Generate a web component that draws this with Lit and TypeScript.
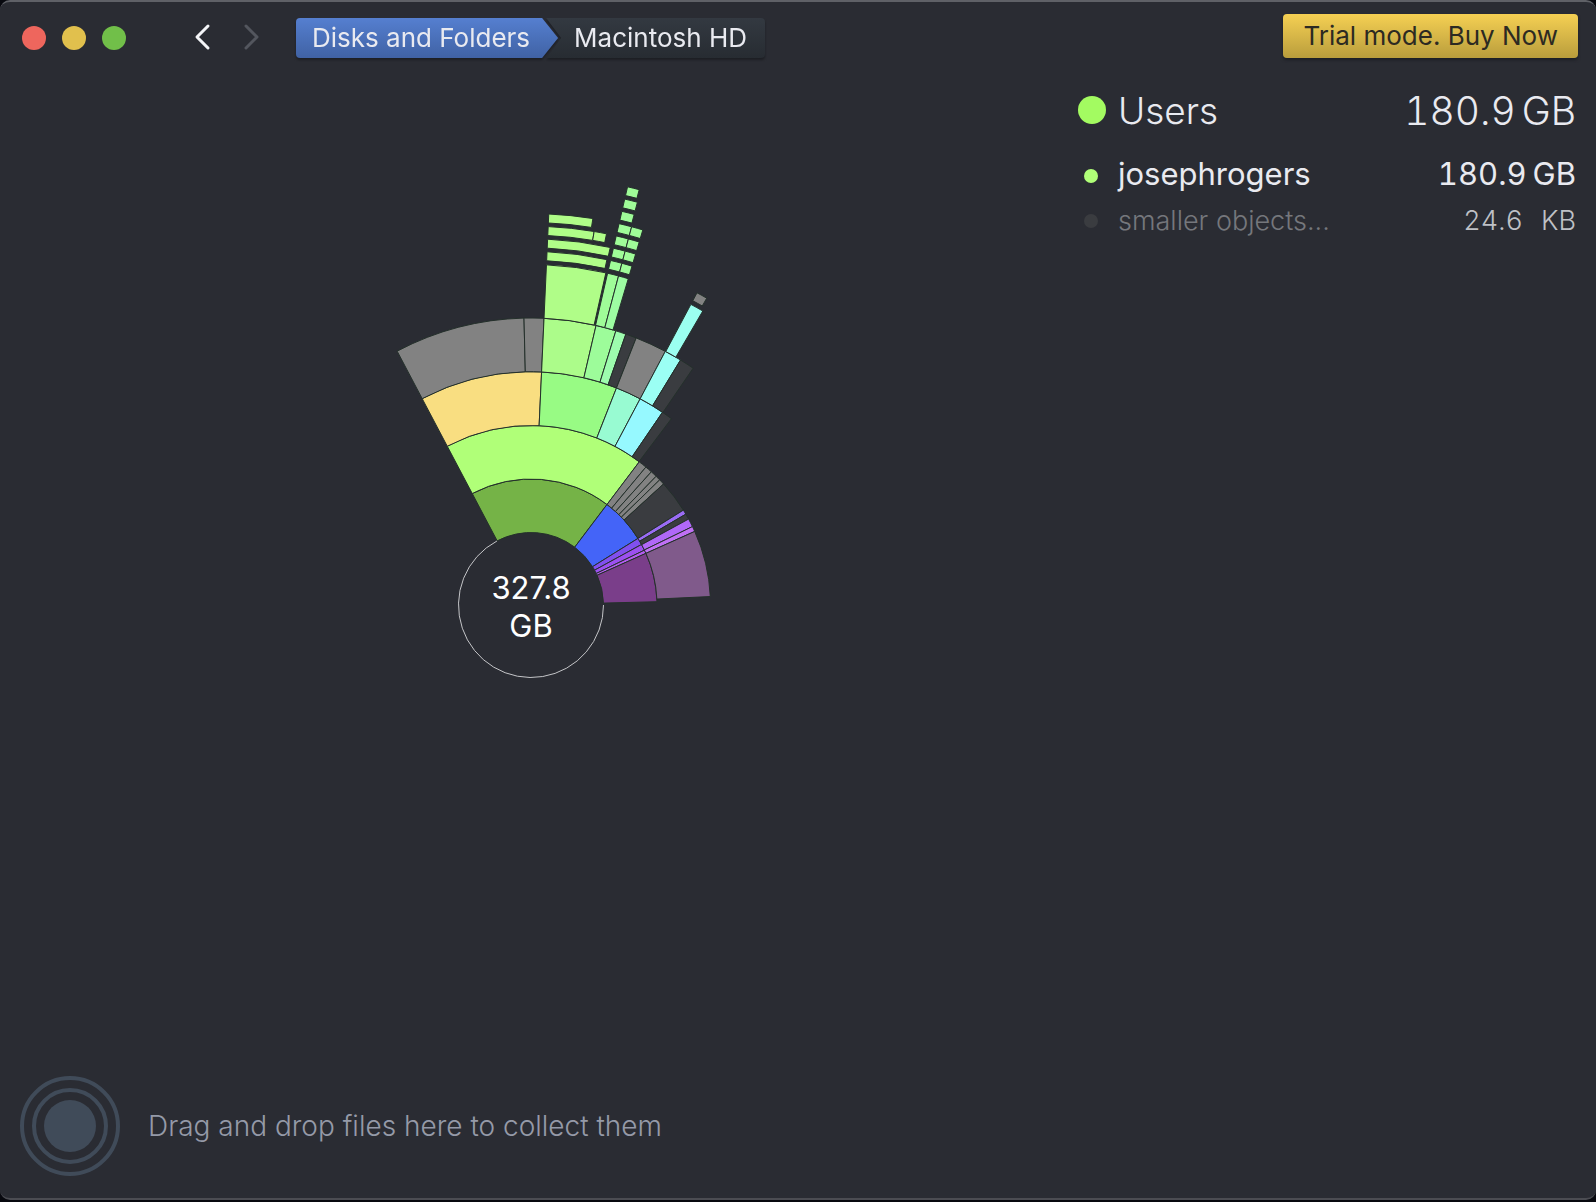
import { LitElement, html, css, svg } from "lit";
import { customElement } from "lit/decorators.js";

type Segment = [ring: number, from: number, to: number, color: string];

const SHADE = "#3a3c40";
const GRAY = "#828282";
const LIME = "#b0fd88";
const FERN = "#9ffc98";

/* Angles are degrees clockwise from twelve o'clock. Rings 0-4 are wide, later rings are thin. */
const SEGMENTS: Segment[] = [
  [0, -27.8, 37.1, "#75b347"],
  [0, 37.1, 58.1, "#4464f8"],
  [0, 58.1, 61.3, "#8150ee"],
  [0, 61.3, 64.2, "#9c50f0"],
  [0, 64.2, 65.8, "#b45cf0"],
  [0, 65.8, 88.5, "#7a3e8a"],

  [1, -27.8, 37.1, "#b0ff78"],
  [1, 37.1, 39.8, GRAY],
  [1, 39.8, 42.1, GRAY],
  [1, 42.1, 44.2, GRAY],
  [1, 44.2, 45.8, GRAY],
  [1, 45.8, 47.6, GRAY],
  [1, 47.6, 58.1, SHADE],
  [1, 58.1, 59.6, "#9a6cf4"],
  [1, 59.6, 61.4, SHADE],
  [1, 61.4, 64.1, "#b068f8"],
  [1, 64.1, 65.8, "#c070f4"],
  [1, 65.8, 87.3, "#805a8b"],

  [2, -27.8, 2.6, "#f9de81"],
  [2, 2.6, 21.5, "#98fb84"],
  [2, 21.5, 27.9, "#98fbd2"],
  [2, 27.9, 34.3, "#96f9ff"],
  [2, 34.3, 37.0, SHADE],

  [3, -27.8, -1.4, GRAY],
  [3, -1.4, 2.6, GRAY],
  [3, 2.6, 13.1, "#acfc8a"],
  [3, 13.1, 17.2, "#9dfc9a"],
  [3, 17.2, 19.3, "#9dfcae"],
  [3, 19.3, 21.5, SHADE],
  [3, 21.5, 27.9, GRAY],
  [3, 27.9, 31.4, "#9bfff4"],
  [3, 31.4, 34.4, SHADE],

  [4, 2.6, 12.7, LIME],
  [4, 13.0, 14.9, FERN],
  [4, 14.9, 16.6, "#9dfca2"],
  [4, 28.0, 30.3, "#9bfff0"],

  [5, 2.6, 12.4, LIME],
  [5, 13.0, 14.9, FERN],
  [5, 14.9, 16.6, FERN],
  [5, 28.0, 29.8, GRAY],
  [6, 2.6, 12.5, LIME],
  [6, 13.0, 14.9, FERN],
  [6, 14.9, 16.6, FERN],
  [7, 2.6, 9.6, LIME],
  [7, 9.6, 11.5, LIME],
  [7, 13.0, 14.9, FERN],
  [7, 14.9, 16.6, FERN],
  [8, 2.6, 9.1, LIME],
  [8, 13.0, 14.9, FERN],
  [8, 14.9, 16.6, FERN],
  [9, 13.0, 14.8, FERN],
  [10, 13.0, 14.8, FERN],
  [11, 13.0, 14.6, FERN],
];

const WIDE = [72.5, 126, 179.5, 233.3, 287, 340.5];

function radii(ring: number): [number, number] {
  if (ring < 5) return [WIDE[ring], WIDE[ring + 1]];
  const inner = 344.6 + (ring - 5) * 12.6;
  return [inner, inner + 9];
}

function point(r: number, deg: number): string {
  const a = (deg * Math.PI) / 180;
  return `${(r * Math.sin(a)).toFixed(2)} ${(-r * Math.cos(a)).toFixed(2)}`;
}

function wedge([ring, from, to]: Segment): string {
  const [r0, r1] = radii(ring);
  return `M${point(r0, from)}L${point(r1, from)}A${r1} ${r1} 0 0 1 ${point(r1, to)}L${point(r0, to)}A${r0} ${r0} 0 0 0 ${point(r0, from)}Z`;
}

@customElement("disk-sunburst")
class DiskSunburst extends LitElement {
  static styles = css`
    :host { display: block; min-width: 0; min-height: 0; }
    .chart { display: block; width: 100%; height: 100%; }
    .segment { stroke: #24302b; stroke-width: 1; }
    .hub { fill: none; stroke: #c4c5c8; stroke-width: 1; }
    .total { fill: #fff; font-size: 31px; text-anchor: middle; }
  `;

  render() {
    return html`
      <svg class="chart" viewBox="-531 -527 1062 984" preserveAspectRatio="xMinYMin meet" role="img" aria-label="Disk usage">
        ${SEGMENTS.map((s) => svg`<path class="segment" d=${wedge(s)} fill=${s[3]}></path>`)}
        <path class="hub" d="M${point(72.5, 90)}A72.5 72.5 0 1 1 ${point(72.5, -28)}"></path>
        <text class="total" x="0" y="-6">327.8</text>
        <text class="total" x="0" y="32">GB</text>
      </svg>
    `;
  }
}

@customElement("app-root")
class AppRoot extends LitElement {
  static styles = css`
    :host {
      display: block;
      min-height: 100vh;
      background: #08090f;
      font-family: Inter, "Liberation Sans", sans-serif;
      color: #e9eaf0;
    }
    * { box-sizing: border-box; }
    button { font: inherit; border: 0; padding: 0; background: none; color: inherit; }
    .window {
      display: grid;
      grid-template-rows: 76px minmax(0, 1fr) 136px;
      height: calc(100vh - 2px);
      background: #2a2c33;
      border-top: 2px solid #5f6167;
      border-bottom: 2px solid #4b4c52;
      border-radius: 10px;
    }
    .toolbar { display: flex; align-items: flex-start; padding: 12px 18px 0 22px; }
    .lights { display: flex; gap: 16px; padding-top: 12px; }
    .light { width: 24px; height: 24px; border-radius: 50%; }
    .close { background: #ee665d; }
    .minimize { background: #e1c04d; }
    .zoom { background: #71bf49; }
    .history { display: flex; gap: 16px; margin-left: 60px; padding-top: 6px; }
    .step { width: 32px; height: 32px; }
    .step svg { display: block; fill: none; stroke: #f4f5f8; stroke-width: 3; stroke-linecap: round; stroke-linejoin: round; }
    .step:disabled svg { stroke: #53565e; }
    .path {
      display: flex;
      margin: 4px 0 0 30px;
      height: 40px;
      font-size: 26px;
      line-height: 40px;
      filter: drop-shadow(0 2px 1px #1c1e23);
    }
    .crumb { color: inherit; text-decoration: none; white-space: nowrap; }
    .parent {
      padding: 0 28px 0 16px;
      border-radius: 4px 0 0 4px;
      background: linear-gradient(#557fd0, #4062a4);
      clip-path: polygon(0 0, calc(100% - 16px) 0, 100% 50%, calc(100% - 16px) 100%, 0 100%);
    }
    .current {
      margin-left: -12px;
      padding: 0 18px 0 28px;
      border-radius: 0 4px 4px 0;
      background: linear-gradient(#333941, #272c32);
      clip-path: polygon(0 0, 100% 0, 100% 100%, 0 100%, 15px 50%);
    }
    .buy {
      margin-left: auto;
      height: 44px;
      padding: 0 20px;
      border-radius: 4px;
      background: linear-gradient(#f5d053, #b99d3c);
      box-shadow: 0 2px 3px #1c1e23;
      color: #2c2a22;
      font-size: 26px;
      line-height: 44px;
      white-space: nowrap;
    }
    .content { display: grid; grid-template-columns: 2fr 1fr; min-height: 0; }
    .side { padding: 2px 20px 0 12px; }
    .list { width: 100%; border-collapse: collapse; }
    .list th, .list td { padding: 0; font-weight: inherit; text-align: left; white-space: nowrap; }
    .list .mark { width: 42px; }
    .list .size { text-align: right; font-variant-numeric: tabular-nums; }
    .dot { display: block; width: 14px; height: 14px; margin-left: 8px; border-radius: 50%; background: #b0ff78; }
    .root { height: 60px; font-size: 37px; font-weight: 300; }
    .root .size { font-size: 39px; }
    .root .dot { width: 28px; height: 28px; margin-left: 2px; background: #a3fb61; }
    .folder { height: 66px; font-size: 31px; font-weight: 400; }
    .folder .dot { margin-top: 6px; }
    .rest { height: 30px; font-size: 27px; line-height: 30px; font-weight: 300; }
    .rest .dot { background: #3a3c40; }
    .rest .label { color: #75777c; }
    .rest .size { color: #bfc1c6; }
    .unit { margin-left: 18px; }
    .near { margin-left: 6px; }
    .dropzone { display: flex; align-items: center; gap: 28px; padding: 0 20px 8px; color: #959aa8; font-size: 28px; font-weight: 300; }
    .target { display: block; fill: none; stroke: #404b59; stroke-width: 4; }
    .core { fill: #404b59; stroke: none; }
  `;

  render() {
    return html`
      <div class="window">
        <header class="toolbar">
          <div class="lights">
            <button class="light close" aria-label="Close"></button>
            <button class="light minimize" aria-label="Minimize"></button>
            <button class="light zoom" aria-label="Zoom"></button>
          </div>
          <div class="history">
            <button class="step" aria-label="Back">
              <svg width="32" height="32" viewBox="0 0 32 32"><path d="M22 6L11 17L22 28"></path></svg>
            </button>
            <button class="step" aria-label="Forward" disabled>
              <svg width="32" height="32" viewBox="0 0 32 32"><path d="M12 6L23 17L12 28"></path></svg>
            </button>
          </div>
          <nav class="path" aria-label="Location">
            <a class="crumb parent" href="#disks">Disks and Folders</a>
            <a class="crumb current" href="#macintosh-hd">Macintosh HD</a>
          </nav>
          <button class="buy">Trial mode. Buy Now</button>
        </header>
        <main class="content">
          <disk-sunburst></disk-sunburst>
          <aside class="side">
            <table class="list">
              <tbody>
                <tr class="root">
                  <td class="mark"><span class="dot"></span></td>
                  <th class="label" scope="row">Users</th>
                  <td class="size">180.9<span class="near">GB</span></td>
                </tr>
                <tr class="folder">
                  <td class="mark"><span class="dot"></span></td>
                  <th class="label" scope="row">josephrogers</th>
                  <td class="size">180.9<span class="near">GB</span></td>
                </tr>
                <tr class="rest">
                  <td class="mark"><span class="dot"></span></td>
                  <th class="label" scope="row">smaller objects...</th>
                  <td class="size">24.6<span class="unit">KB</span></td>
                </tr>
              </tbody>
            </table>
          </aside>
        </main>
        <footer class="dropzone">
          <svg class="target" width="100" height="100" viewBox="-50 -50 100 100" aria-hidden="true">
            <circle r="48"></circle>
            <circle r="36"></circle>
            <circle class="core" r="26"></circle>
          </svg>
          <span>Drag and drop files here to collect them</span>
        </footer>
      </div>
    `;
  }
}
